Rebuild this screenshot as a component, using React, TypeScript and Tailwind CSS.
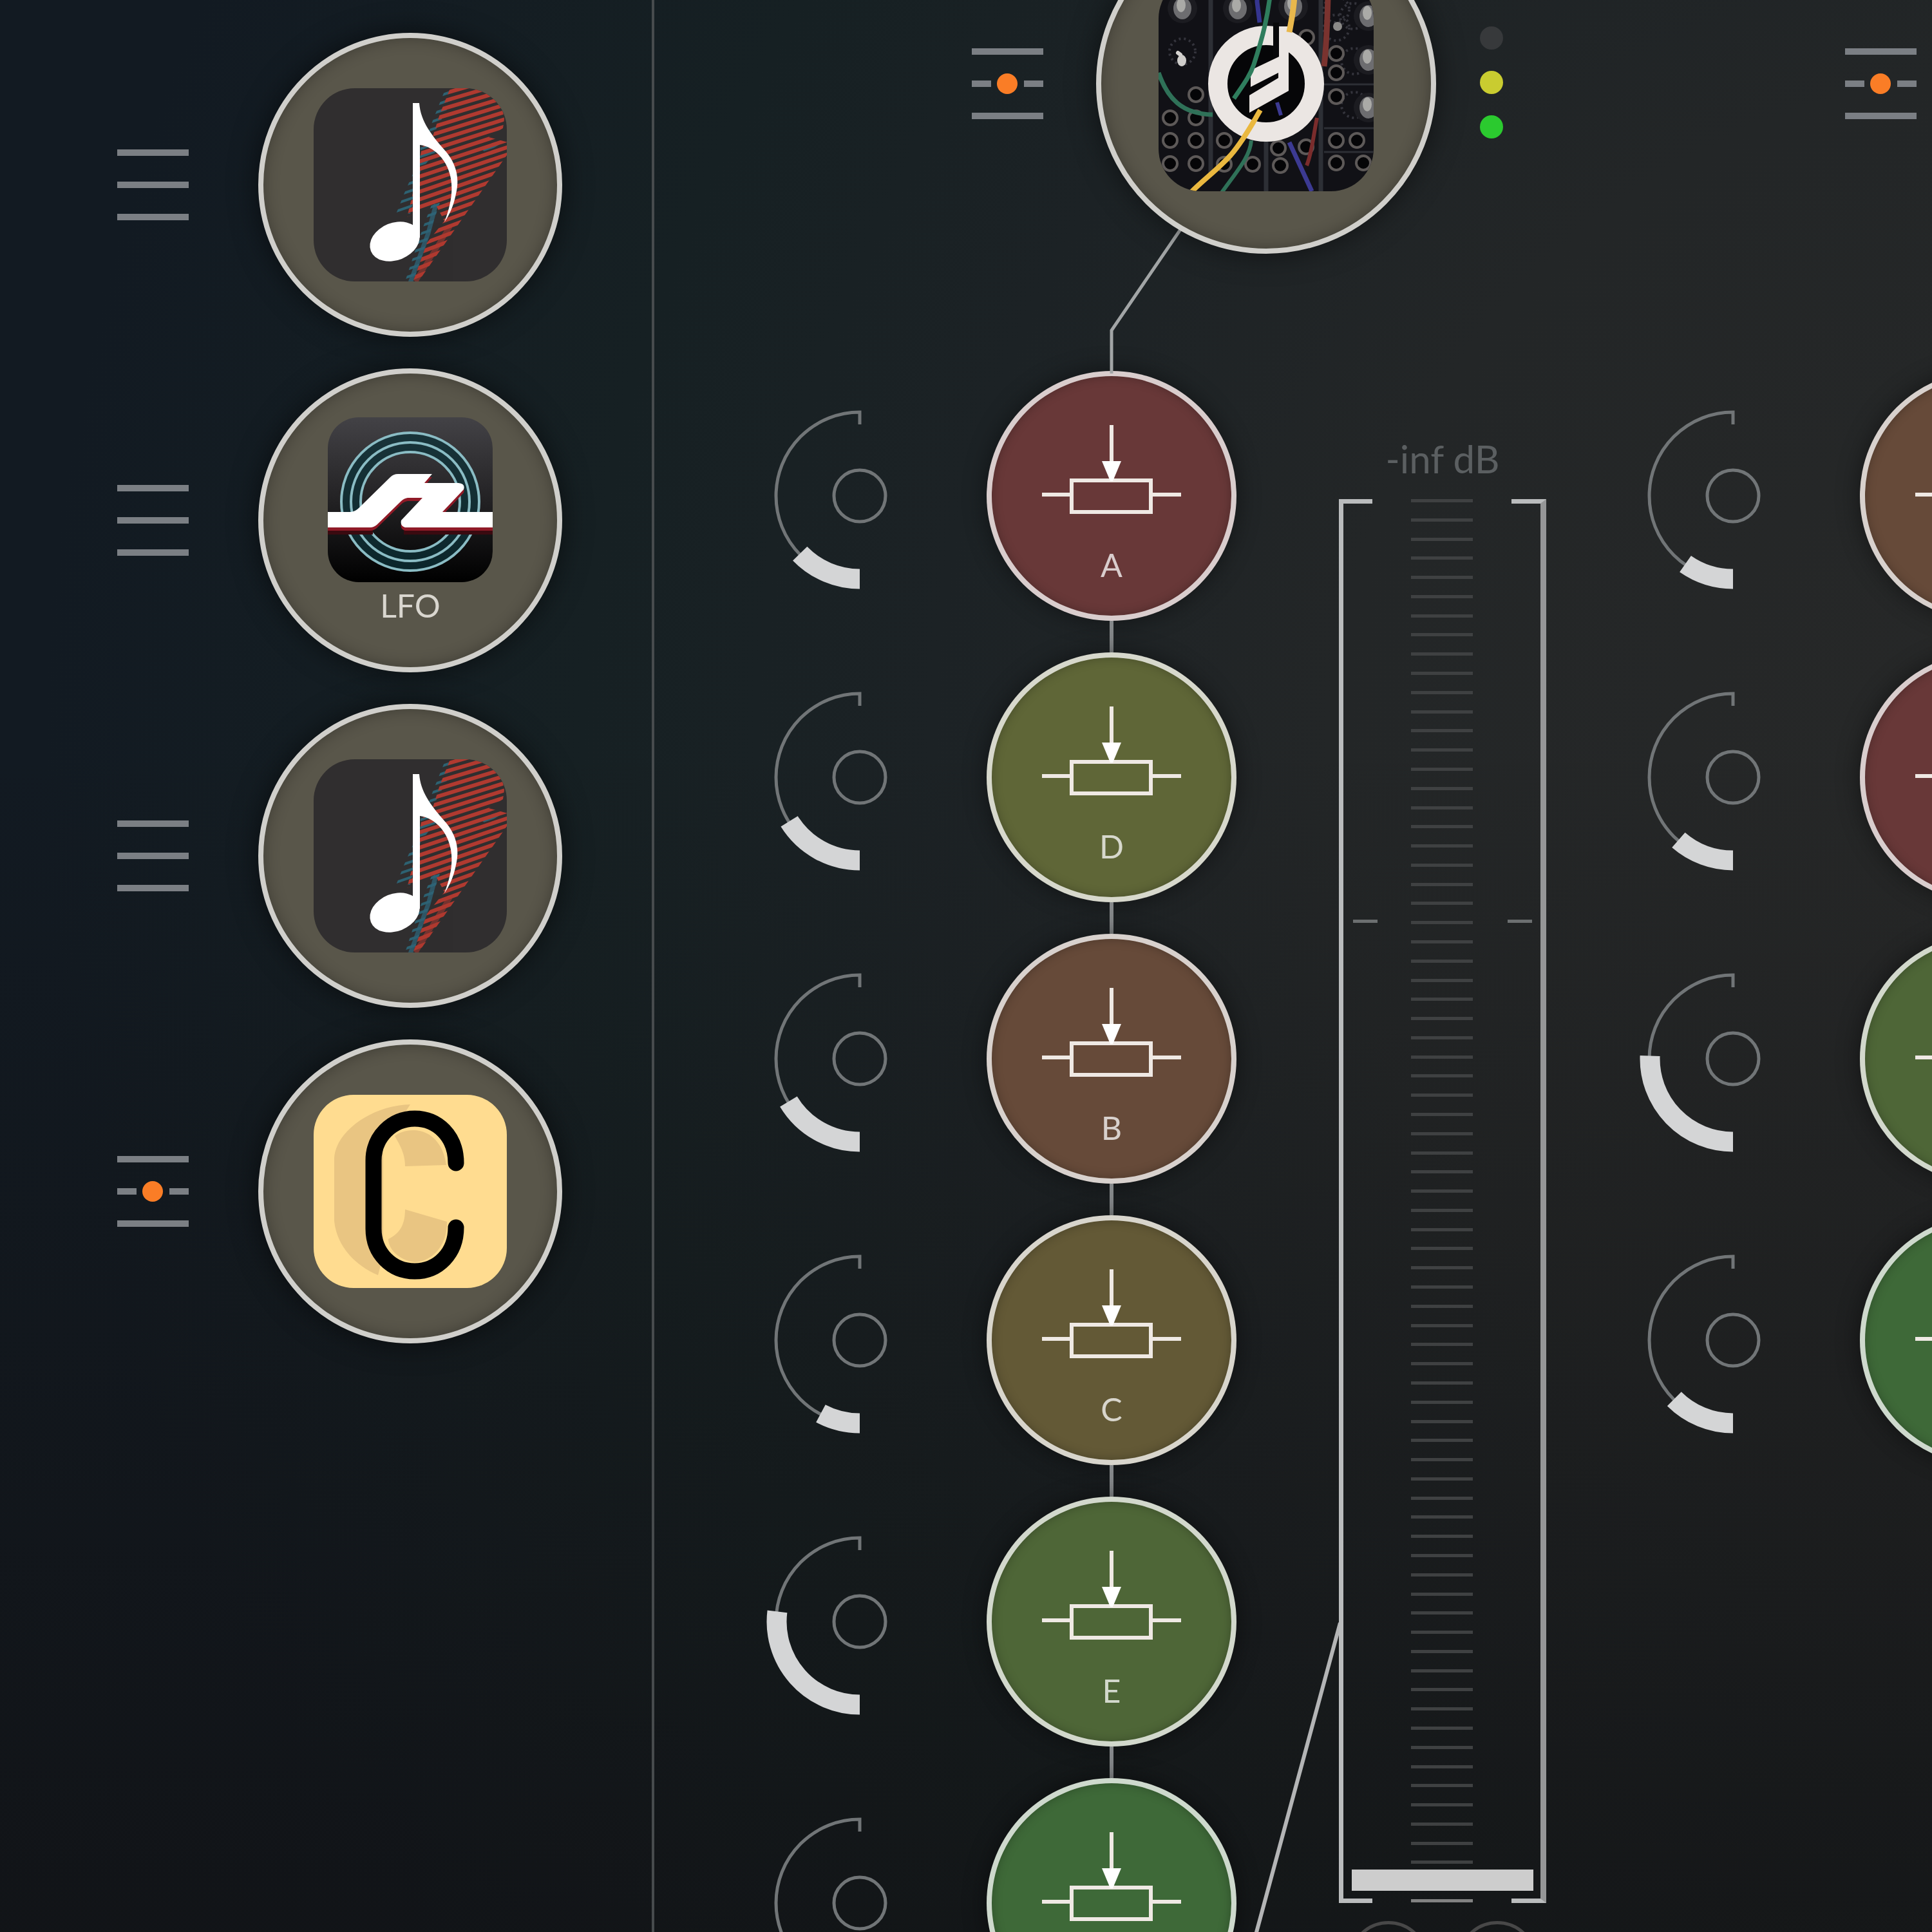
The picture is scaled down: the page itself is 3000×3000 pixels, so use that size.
import { useId, useState } from 'react';
import type { ReactNode } from 'react';
import clsx from 'clsx';

interface Source {
  name: string;
  icon: ReactNode;
  label?: string;
  modulated?: boolean;
}

interface Fader {
  name: string;
  color: string;
  angle: number;
  label?: string;
}

interface ChannelData {
  name: string;
  faders: Fader[];
  hasMeter: boolean;
}

const channels: ChannelData[] = [
  {
    name: 'Channel 1',
    hasMeter: true,
    faders: [
      { name: 'A', label: 'A', color: 'bg-[#683838]', angle: 46 },
      { name: 'D', label: 'D', color: 'bg-[#5f6637]', angle: 58 },
      { name: 'B', label: 'B', color: 'bg-[#664a39]', angle: 59 },
      { name: 'C', label: 'C', color: 'bg-[#635936]', angle: 28 },
      { name: 'E', label: 'E', color: 'bg-[#4e6637]', angle: 97 },
      { name: 'F', color: 'bg-[#3e6938]', angle: 50 },
    ],
  },
  {
    name: 'Channel 2',
    hasMeter: false,
    faders: [
      { name: 'B', color: 'bg-[#664a39]', angle: 35 },
      { name: 'A', color: 'bg-[#683838]', angle: 41 },
      { name: 'E', color: 'bg-[#4e6637]', angle: 92 },
      { name: 'F', color: 'bg-[#3e6938]', angle: 45 },
    ],
  },
];

const sources: Source[] = [
  { name: 'Note', icon: <NoteIcon /> },
  { name: 'LFO', icon: <LfoIcon />, label: 'LFO' },
  { name: 'Note 2', icon: <NoteIcon /> },
  { name: 'C', icon: <CIcon />, modulated: true },
];

function NoteIcon() {
  const id = useId();
  const lines = Array.from({ length: 32 }, (_, i) => i * 12);

  return (
    <svg viewBox="0 0 300 300" className="size-[300px]" aria-hidden="true">
      <defs>
        <clipPath id={`${id}-tile`}>
          <rect width="300" height="300" rx="64" />
        </clipPath>
        <clipPath id={`${id}-red`}>
          <path d="M212 0H262Q292 12 296 48L294 62 272 76 302 84 300 104 160 304 156 296 176 240 203 206 190 182 145 200 150 180 160 138 168 92 184 78 196 40Z" />
        </clipPath>
        <clipPath id={`${id}-teal`}>
          <path d="M205 0H225L176 90 158 160 150 195H128L142 160 160 120 185 50ZM165 85 190 98 168 125ZM262 96 285 82 294 84 268 100ZM185 176 196 178 180 225 155 300H142L160 245 172 210Z" />
        </clipPath>
      </defs>
      <rect width="300" height="300" rx="64" fill="#302e2f" />
      <g clipPath={`url(#${id}-tile)`}>
        <g clipPath={`url(#${id}-teal)`} stroke="#2d6272" strokeWidth="4">
          {lines.map((y) => (
            <path key={y} d={`M120 ${y + 26}L310 ${y - 40}`} />
          ))}
        </g>
        <path d="M190 180L178 225 150 302" stroke="#2f6478" strokeWidth="7" fill="none" opacity=".75" />
        <g clipPath={`url(#${id}-red)`} stroke="#b03a30" strokeWidth="6">
          {lines.map((y) => (
            <path key={y} d={`M120 ${y + 20}L310 ${y - 34 - y / 14}`} />
          ))}
        </g>
        <path d="M212 214L158 300" stroke="#b03a30" strokeWidth="8" opacity=".55" />
      </g>
      <path
        fill="#fff"
        d="M154 23H164C166 52 184 74 206 99C224 121 226 144 221 164C217 184 211 196 203 208C212 184 217 162 213 140C208 112 188 91 165 88V232H154Z"
      />
      <ellipse cx="126" cy="238" rx="40" ry="29" transform="rotate(-22 126 238)" fill="#fff" />
    </svg>
  );
}

function LfoIcon() {
  const id = useId();
  const wave =
    'M0 147H36Q43 146 48 141L97 93Q102 88 109 88H162L150 102H203Q214 103 211 112L178 147H256V171H120Q112 169 114 160L147 125H124Q118 126 114 130L76 167Q71 171 66 171H0Z';

  return (
    <svg viewBox="0 0 256 256" className="size-[256px]" aria-hidden="true">
      <defs>
        <linearGradient id={`${id}-bg`} x1="0" y1="0" x2="0" y2="1">
          <stop offset="0" stopColor="#434246" />
          <stop offset=".5" stopColor="#232224" />
          <stop offset="1" stopColor="#000" />
        </linearGradient>
        <clipPath id={`${id}-tile`}>
          <rect width="256" height="256" rx="48" />
        </clipPath>
      </defs>
      <rect width="256" height="256" rx="48" fill={`url(#${id}-bg)`} />
      <circle cx="128" cy="131" r="92" fill="none" stroke="#0d3138" strokeWidth="30" opacity=".75" />
      <g fill="none" stroke="#8abcc4" strokeWidth="4">
        <circle cx="128" cy="131" r="107" />
        <circle cx="128" cy="131" r="92" />
        <circle cx="128" cy="131" r="77" />
      </g>
      <g clipPath={`url(#${id}-tile)`}>
        <path d="M0 171H70V182H0ZM118 171H256V182H118Z" fill="#3a0a10" />
      </g>
      <path d={wave} fill="#8f1a27" transform="translate(0 5)" />
      <path d={wave} fill="#fff" />
    </svg>
  );
}

function CIcon() {
  return (
    <svg viewBox="0 0 300 300" className="size-[300px]" aria-hidden="true">
      <rect width="300" height="300" rx="62" fill="#ffdc90" />
      <g fill="#e9c582">
        <path d="M150 15C90 16 34 58 32 98V196C36 236 66 266 100 280L108 250V80Z" />
        <path d="M126 64C142 50 196 44 206 109L142 111C142 92 135 80 126 64Z" />
        <path d="M142 178L207 197C208 236 182 259 157 260C130 256 116 238 116 224C135 215 142 200 142 178Z" />
      </g>
      <path
        d="M221 106C221 64 192 37 157 37C121 37 93 66 93 102V208C93 246 121 274 157 274C193 274 221 246 221 206"
        fill="none"
        stroke="#000"
        strokeWidth="25"
        strokeLinecap="round"
      />
    </svg>
  );
}

const jacks = [
  [18, 220], [58, 184], [58, 220], [18, 255], [58, 255], [102, 255], [18, 291],
  [58, 291], [102, 292], [146, 292], [189, 294], [276, 120], [276, 150], [276, 187],
  [276, 255], [308, 255], [276, 290], [318, 290], [230, 95], [186, 267], [229, 265],
];

const knobs = [[37, 50], [123, 50], [209, 47], [326, 62], [326, 130], [326, 204]];

const smallKnobs = [[276, 52], [276, 80], [37, 117], [302, 62], [304, 132], [304, 200]];

function ModularIcon() {
  const id = useId();

  return (
    <svg viewBox="0 0 334 334" className="size-[334px]" aria-hidden="true">
      <defs>
        <clipPath id={id}>
          <rect width="334" height="334" rx="66" />
        </clipPath>
      </defs>
      <g clipPath={`url(#${id})`}>
        <rect width="334" height="334" fill="#111116" />
        <g stroke="#2d2f35" strokeWidth="7">
          <path d="M81 0V310M167 240V334M252 0V334" />
          <path d="M257 168H334M257 236H334M257 273H334" strokeWidth="3" />
        </g>
        <g fill="none" stroke="#34343c" strokeWidth="4" strokeDasharray="3 5">
          {smallKnobs.map(([x, y]) => (
            <circle key={`${x}-${y}`} cx={x} cy={y} r="20" />
          ))}
        </g>
        {knobs.map(([x, y]) => (
          <g key={`${x}-${y}`}>
            <circle cx={x} cy={y} r="23" fill="#1c1c21" />
            <ellipse cx={x} cy={y} rx="14" ry="17" fill="#6d6d70" />
            <ellipse cx={x - 2} cy={y - 5} rx="7" ry="11" fill="#aaaaa7" />
          </g>
        ))}
        <circle cx="278" cy="78" r="7" fill="#8b8a88" />
        <path d="M30 119L34 122" stroke="#d5d3d0" strokeWidth="6" strokeLinecap="round" />
        <ellipse cx="36" cy="131" rx="7" ry="9" fill="#cfcdca" />
        <g fill="#050507" stroke="#5d5958" strokeWidth="4">
          {jacks.map(([x, y]) => (
            <circle key={`${x}-${y}`} cx={x} cy={y} r="11" />
          ))}
        </g>
        <g fill="none" strokeWidth="5">
          <path d="M264 0C262 60 262 100 257 140" stroke="#7a332f" strokeWidth="9" />
          <path d="M246 220C240 250 238 275 230 294" stroke="#7a2c2c" strokeWidth="6" />
          <path d="M153 0V40L157 72" stroke="#35358f" strokeWidth="7" />
          <path d="M203 258L238 334" stroke="#3c3a92" strokeWidth="7" />
          <path d="M0 150C14 190 36 214 84 215" stroke="#2f7158" strokeWidth="7" />
          <path d="M144 255C142 280 124 300 98 336" stroke="#2f7158" strokeWidth="6" />
        </g>
        <circle cx="167" cy="167" r="62" fill="#060608" />
        <circle cx="167" cy="167" r="75" fill="none" stroke="#ebe6e3" strokeWidth="30" />
        <path d="M178 72H187V130H178Z" fill="#08080a" />
        <path
          d="M187 78H202V178L141 212V185L186 158V150L143 172V146L187 125Z"
          fill="#ebe6e3"
        />
        <path d="M184 196L190 216" stroke="#3c3a92" strokeWidth="6" />
        <g fill="none">
          <path d="M176 0C172 60 160 100 148 137C142 155 132 168 117 190" stroke="#2f7d5d" strokeWidth="7" />
          <path d="M212 0C212 40 208 60 203 87" stroke="#e9b84c" strokeWidth="9" />
          <path d="M158 208C146 228 134 252 112 278C92 300 70 316 50 336" stroke="#eab83f" strokeWidth="8" />
        </g>
      </g>
    </svg>
  );
}

function MenuButton({ label, active }: { label: string; active?: boolean }) {
  return (
    <button aria-label={label} className="flex w-[111px] shrink-0 flex-col gap-10">
      <span className="h-[10px] w-full bg-[#7b7f84]" />
      {active ? (
        <span className="relative flex h-[10px] w-full justify-between">
          <span className="w-[30px] bg-[#7b7f84]" />
          <span className="absolute -top-[11px] left-[39px] size-8 rounded-full bg-[#fa7d26]" />
          <span className="w-[30px] bg-[#7b7f84]" />
        </span>
      ) : (
        <span className="h-[10px] w-full bg-[#7b7f84]" />
      )}
      <span className="h-[10px] w-full bg-[#7b7f84]" />
    </button>
  );
}

function SourceRow({ source }: { source: Source }) {
  return (
    <li className="flex items-center gap-[108px]">
      <MenuButton label={`${source.name} menu`} active={source.modulated} />
      <button
        aria-label={source.name}
        className="flex size-[472px] shrink-0 flex-col items-center justify-center rounded-full border-8 border-[#d0cfcb] bg-[#59564a] shadow-[0_0_44px_rgba(0,0,0,0.55),inset_0_0_24px_rgba(0,0,0,0.3)]"
      >
        {source.icon}
        {source.label && (
          <span className="pt-2 text-[50px] leading-[56px] text-[#d9d6cf]">{source.label}</span>
        )}
      </button>
    </li>
  );
}

function Knob({ angle, label }: { angle: number; label: string }) {
  const [value, setValue] = useState(angle);
  const rad = (value * Math.PI) / 180;
  const x = 145 - 129 * Math.sin(rad);
  const y = 145 + 129 * Math.cos(rad);

  return (
    <div className="relative flex h-[388px] w-[290px] items-center">
      <svg viewBox="0 0 290 290" className="size-[290px]" fill="none" aria-hidden="true">
        <path d="M145 275A130 130 0 0 1 145 15V34" stroke="#717577" strokeWidth="5" />
        <circle cx="145" cy="145" r="40" stroke="#717577" strokeWidth="5" />
        <path d={`M145 274A129 129 0 0 1 ${x} ${y}`} stroke="#d4d5d6" strokeWidth="31" />
      </svg>
      <input
        type="range"
        min={0}
        max={180}
        value={value}
        aria-label={label}
        onChange={(e) => setValue(Number(e.target.value))}
        className="absolute inset-0 h-full w-full cursor-pointer opacity-0"
      />
    </div>
  );
}

function FaderButton({ fader }: { fader: Fader }) {
  return (
    <button
      aria-label={`Fader ${fader.name}`}
      className={clsx(
        'flex size-[388px] shrink-0 flex-col items-center rounded-full border-8 border-white/75 pt-[73px] shadow-[0_0_36px_rgba(0,0,0,0.45),inset_0_0_16px_rgba(0,0,0,0.25)]',
        fader.color
      )}
    >
      <svg viewBox="0 0 220 144" className="h-[144px] w-[220px]" fill="none" aria-hidden="true">
        <g stroke="#efe9e4" strokeWidth="6">
          <path d="M110 3V64" />
          <path d="M2 111H48M172 111H218" />
          <rect x="48" y="89" width="123" height="49" />
        </g>
        <path d="M95 59H125L112 90H108Z" fill="#fff" />
      </svg>
      {fader.label && (
        <span className="mt-[46px] text-[50px] leading-[60px] text-white/75">{fader.label}</span>
      )}
    </button>
  );
}

function Meter() {
  const [level, setLevel] = useState(0);

  return (
    <div className="flex w-[322px] shrink-0 flex-col items-center pt-[104px]">
      <label htmlFor="level" className="text-[60px] leading-[64px] text-[#5b5f61]">
        -inf dB
      </label>
      <div className="relative mt-[31px] flex h-[2180px] w-full shrink-0 justify-between">
        <div className="w-[52px] border-y-[7px] border-l-[7px] border-[#babcbd]" />
        <div className="flex w-24 flex-col justify-between">
          {Array.from({ length: 74 }, (_, i) => (
            <span
              key={i}
              className={clsx('h-[5px] w-full', i === 73 ? 'bg-[#818181]' : 'bg-[#3f4142]')}
            />
          ))}
        </div>
        <div className="w-[54px] border-y-[7px] border-r-[9px] border-y-[#babcbd] border-r-[#959697]" />
        {/* Unity gain marks */}
        <div className="absolute inset-x-[22px] top-[653px] flex justify-between">
          <span className="h-[5px] w-[38px] bg-[#6c6f70]" />
          <span className="h-[5px] w-[38px] bg-[#6c6f70]" />
        </div>
        <div className="absolute inset-x-5 top-5 bottom-[19px]">
          <input
            id="level"
            type="range"
            min={0}
            max={100}
            value={level}
            onChange={(e) => setLevel(Number(e.target.value))}
            className="m-0 block h-full w-full cursor-pointer appearance-none bg-transparent [direction:rtl] [writing-mode:vertical-lr] [&::-webkit-slider-thumb]:h-[33px] [&::-webkit-slider-thumb]:w-[282px] [&::-webkit-slider-thumb]:appearance-none [&::-webkit-slider-thumb]:bg-[#cdcdcd]"
          />
        </div>
      </div>
      <div className="mt-7 flex gap-[45px]">
        <button aria-label="Mute" className="size-[124px] rounded-full border-[5px] border-[#484848]" />
        <button aria-label="Solo" className="size-[124px] rounded-full border-[5px] border-[#484848]" />
      </div>
    </div>
  );
}

function Channel({ channel }: { channel: ChannelData }) {
  return (
    <section aria-label={channel.name} className="relative w-[1356px] shrink-0">
      {/* Patch wires */}
      {channel.hasMeter && (
        <svg
          viewBox="0 0 1356 3000"
          className="pointer-events-none absolute top-0 left-0 h-[3000px] w-[1356px]"
          fill="none"
          aria-hidden="true"
        >
          <path d="M820 352L710 513V580" stroke="#a2a5a6" strokeWidth="5" />
          <path d="M1065 2520L934 3004" stroke="#b4b5b6" strokeWidth="6" />
        </svg>
      )}

      <header className="flex h-[394px] items-end pl-[493px]">
        <div className="flex h-[528px] shrink-0 items-center">
          <MenuButton label={`${channel.name} menu`} active />
          <button
            aria-label={`${channel.name} instrument`}
            className="relative ml-[82px] flex size-[528px] shrink-0 items-center justify-center rounded-full border-8 border-[#d0cfcb] bg-[#59564a] shadow-[0_0_44px_rgba(0,0,0,0.5),inset_0_0_24px_rgba(0,0,0,0.3)]"
          >
            <ModularIcon />
          </button>
          <div className="ml-[68px] flex flex-col gap-[33px] pb-1">
            <span className="size-9 rounded-full bg-[#37393b]" />
            <span className="size-9 rounded-full bg-[#c9cc30]" />
            <span className="size-9 rounded-full bg-[#2bca2f]" />
          </div>
        </div>
      </header>

      <div className="flex items-start pt-[182px] pl-[174px]">
        <div className="flex shrink-0 flex-col gap-[49px]">
          {channel.faders.map((fader) => (
            <Knob key={fader.name} angle={fader.angle} label={`Send ${fader.name}`} />
          ))}
        </div>
        <div className="ml-[52px] flex shrink-0 flex-col items-center">
          {channel.faders.map((fader, i) => (
            <div key={fader.name} className="flex flex-col items-center">
              {i > 0 && <span className="h-[49px] w-[6px] bg-[#85888a]" />}
              <FaderButton fader={fader} />
            </div>
          ))}
        </div>
        {channel.hasMeter && (
          <div className="ml-[159px] shrink-0">
            <Meter />
          </div>
        )}
      </div>
    </section>
  );
}

export default function App() {
  return (
    <main className="flex h-screen overflow-hidden bg-[#121a20] bg-[linear-gradient(to_bottom,transparent_38%,rgba(17,15,15,0.55)_100%),radial-gradient(circle_at_105%_40%,#272828_0%,#232627_30%,#1c2225_47%,#162023_62%,#121a22_85%)] font-['Lato','Liberation_Sans',sans-serif]">
      <aside className="w-[1016px] shrink-0 border-r-4 border-[#474b4d]">
        <ul className="flex flex-col gap-[49px] pt-[51px] pl-[182px]">
          {sources.map((source) => (
            <SourceRow key={source.name} source={source} />
          ))}
        </ul>
      </aside>
      {channels.map((channel) => (
        <Channel key={channel.name} channel={channel} />
      ))}
    </main>
  );
}
